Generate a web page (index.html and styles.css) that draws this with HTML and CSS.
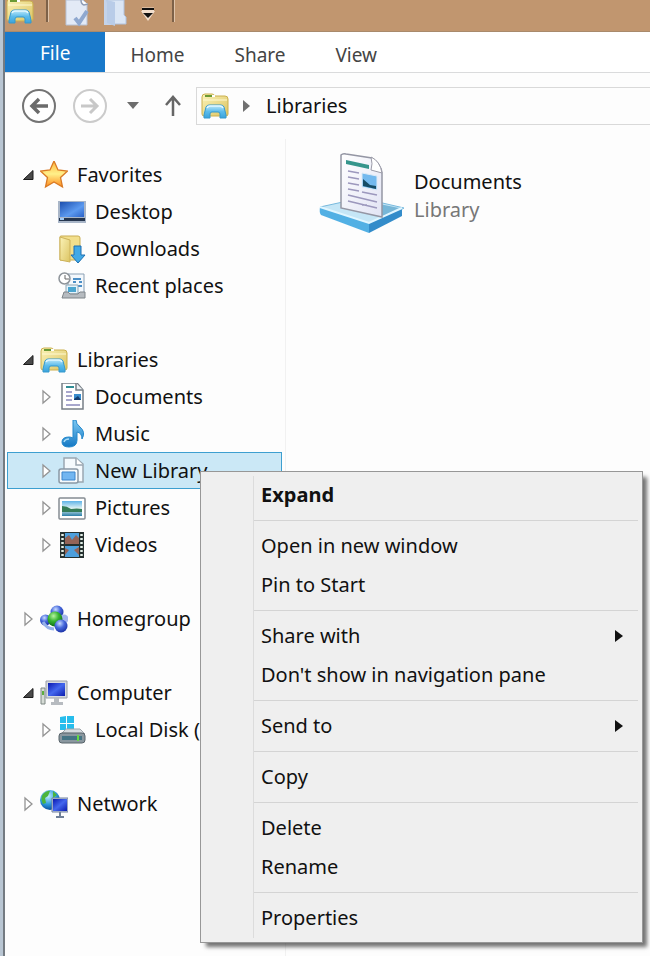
FILE: index.html
```
<!DOCTYPE html>
<html lang="en">
<head>
<meta charset="utf-8">
<title>Libraries</title>
<link rel="stylesheet" href="styles.css">
</head>
<body>
<svg class="defs" aria-hidden="true">
  <defs>
    <linearGradient id="gFolder" x1="0" y1="0" x2="1" y2="1"><stop offset="0" stop-color="#fbf3b8"/><stop offset="1" stop-color="#dcc462"/></linearGradient>
    <linearGradient id="gStand" x1="0" y1="0" x2="0" y2="1"><stop offset="0" stop-color="#c4ebfa"/><stop offset=".5" stop-color="#5cbcec"/><stop offset="1" stop-color="#3aa3dc"/></linearGradient>
    <linearGradient id="gBlue" x1="0" y1="0" x2="1" y2="1"><stop offset="0" stop-color="#1c4fae"/><stop offset=".6" stop-color="#5c9af0"/><stop offset="1" stop-color="#2a62c8"/></linearGradient>
    <linearGradient id="gScreen" x1="0" y1="0" x2="1" y2="1"><stop offset="0" stop-color="#0a18b0"/><stop offset=".5" stop-color="#4468ee"/><stop offset="1" stop-color="#0c1cae"/></linearGradient>
    <linearGradient id="gStar" x1="0" y1="0" x2="0" y2="1"><stop offset="0" stop-color="#ffb43c"/><stop offset=".5" stop-color="#fff08a"/><stop offset="1" stop-color="#ff8a1c"/></linearGradient>
    <linearGradient id="gNote" x1="0" y1="0" x2="0" y2="1"><stop offset="0" stop-color="#7cc8f2"/><stop offset="1" stop-color="#1478c4"/></linearGradient>
    <linearGradient id="gPhoto" x1="0" y1="0" x2="0" y2="1"><stop offset="0" stop-color="#5fb4e8"/><stop offset=".5" stop-color="#e4f4f4"/><stop offset="1" stop-color="#2a7ea8"/></linearGradient>
    <linearGradient id="gPaper" x1="0" y1="0" x2="1" y2="1"><stop offset="0" stop-color="#ffffff"/><stop offset="1" stop-color="#e2e4f4"/></linearGradient>
    <radialGradient id="gBallB" cx=".4" cy=".3" r=".7"><stop offset="0" stop-color="#c8dcff"/><stop offset=".5" stop-color="#4668dc"/><stop offset="1" stop-color="#1c34a8"/></radialGradient>
    <radialGradient id="gBallG" cx=".4" cy=".3" r=".7"><stop offset="0" stop-color="#b8f4a0"/><stop offset=".5" stop-color="#36b430"/><stop offset="1" stop-color="#107018"/></radialGradient>
    <radialGradient id="gGlobe" cx=".4" cy=".3" r=".7"><stop offset="0" stop-color="#c4f0ff"/><stop offset=".6" stop-color="#2c98dc"/><stop offset="1" stop-color="#0c50a0"/></radialGradient>
    <symbol id="library" viewBox="0 0 28 26">
      <path d="M1 21V4q0-3 3-3h7q2 0 3 2h10q3 0 3 3v15q0 2-2 2H3q-2 0-2-2z" fill="url(#gFolder)" stroke="#cbb04e"/>
      <path d="M4 3h7" stroke="#6a9a34" stroke-width="2"/><path d="M11 3h3" stroke="#fff" stroke-width="2"/><path d="M2 7h24" stroke="#fff9d2"/>
      <path d="M3 25v-3l2-8q1-2 3-2h12q2 0 3 2l2 8v3h-6v-4q0-2-2-2h-6q-2 0-2 2v4z" fill="url(#gStand)" stroke="#3799cd"/>
      <path d="M6 15q1-2 3-2h10q2 0 3 2" fill="none" stroke="#e1f7ff" stroke-width="1.500"/>
    </symbol>
    <symbol id="closed" viewBox="0 0 12 16"><path d="M3 2l7 6-7 6z" fill="#fff" stroke="#949494" stroke-width="1.300"/></symbol>
    <symbol id="open" viewBox="0 0 12 12"><path d="M11 1.500v9H1.500z" fill="#4a4a4a" stroke="#1c1c1c"/></symbol>
  </defs>
</svg>

<div class="window">
  <header class="titlebar">
    <svg class="icon app" viewBox="0 0 28 26"><use href="#library"/></svg>
    <span class="bar"></span>
    <button class="quick" aria-label="Properties"><svg width="24" height="28" viewBox="0 0 24 28"><path d="M1 0h17l4 4v21H1z" fill="#e3eaf6" stroke="#b7c2d6"/><path d="M16 0q0 4 3 5l4-1" fill="#fff" stroke="#8f9db4" stroke-width="1.500"/><path d="M10 18l4 5 8-12" fill="none" stroke="#8fa8cf" stroke-width="4"/></svg></button>
    <button class="quick" aria-label="New folder"><svg width="24" height="28" viewBox="0 0 24 28"><path d="M1 0h9v25H1z" fill="#c4d3ea"/><path d="M4 0h17v15l2 2v7H8z" fill="#dbe6f5" stroke="#b0c2de"/><path d="M4 0l8 2v24l-8-3z" fill="#b9cce8"/></svg></button>
    <button class="quick more" aria-label="Customize toolbar"><svg width="14" height="14" viewBox="0 0 14 14"><path d="M1 3h12" stroke="#f2dfce" stroke-width="5"/><path d="M0 4h14L7 14z" fill="#f2dfce"/><path d="M1 2h12" stroke="#111" stroke-width="2"/><path d="M2 6h10l-5 5z" fill="#111"/></svg></button>
    <span class="bar"></span>
  </header>

  <nav class="tabs" aria-label="Ribbon">
    <button class="tab file">File</button>
    <button class="tab">Home</button>
    <button class="tab">Share</button>
    <button class="tab">View</button>
  </nav>

  <div class="navbar">
    <button class="nav" aria-label="Back"><svg width="36" height="36" viewBox="0 0 36 36"><circle cx="18" cy="18" r="16" fill="#fff" stroke="#747474" stroke-width="2"/><path d="M27 18H12M18 11l-7 7 7 7" fill="none" stroke="#6b6b6b" stroke-width="3.500"/></svg></button>
    <button class="nav" aria-label="Forward"><svg width="36" height="36" viewBox="0 0 36 36"><circle cx="18" cy="18" r="16" fill="#fff" stroke="#cbcbcb" stroke-width="2"/><path d="M9 18h16M18 11l7 7-7 7" fill="none" stroke="#c8c8c8" stroke-width="3"/></svg></button>
    <button class="nav" aria-label="Recent locations"><svg width="14" height="8" viewBox="0 0 14 8"><path d="M1 0h12L7 7z" fill="#6d6d6d"/></svg></button>
    <button class="nav" aria-label="Up"><svg width="16" height="22" viewBox="0 0 16 22"><path d="M8 21V3M1 10l7-8 7 8" fill="none" stroke="#666" stroke-width="2.500"/></svg></button>
    <div class="address">
      <svg class="icon" viewBox="0 0 28 26"><use href="#library"/></svg>
      <svg class="crumb" width="8" height="12" viewBox="0 0 8 12"><path d="M0 0l7 6-7 6z" fill="#707070"/></svg>
      <span>Libraries</span>
    </div>
  </div>

  <div class="content">
    <nav class="tree" aria-label="Navigation pane">
      <ul>
        <li class="row"><svg class="arrow"><use href="#open"/></svg>
          <svg class="icon" viewBox="0 0 28 28"><path d="M14 0l4 9 9.500 1-7 6.500 2 9.500-8.500-5-8.500 5 2-9.500L.5 10l9.500-1z" fill="url(#gStar)" stroke="#d97a24" stroke-width="1.300"/></svg>Favorites</li>
        <li class="row sub"><span class="arrow"></span>
          <svg class="icon" viewBox="0 0 28 28"><path d="M0 3h28v22H0z" fill="#a9b6c8"/><path d="M2 4h24v15H2z" fill="url(#gBlue)"/><path d="M1 20h26v3H1z" fill="#26364e"/><path d="M2 21h4" stroke="#9fc8f4" stroke-width="2"/></svg>Desktop</li>
        <li class="row sub"><span class="arrow"></span>
          <svg class="icon" viewBox="0 0 28 28"><path d="M2 2q0-1 1-1h17q2 0 2 2v22H2z" fill="#f2df8c" stroke="#c9ad52"/><path d="M2 2l10 3v22L2 25z" fill="url(#gFolder)" stroke="#cdb25a"/><path d="M16 11h7v9h4l-7 8-7-8h3z" fill="#41a9e6" stroke="#1e6fb0"/></svg>Downloads</li>
        <li class="row sub"><span class="arrow"></span>
          <svg class="icon" viewBox="0 0 28 28"><path d="M10 2h16v19H10z" fill="#f4f8fc" stroke="#8ba0b4"/><path d="M15 7h8M15 10h3m3 0h3M17 14h7" stroke="#4d8fc6" stroke-width="2"/><path d="M8 13h12v9H8z" fill="#e4f3fb" stroke="#8fa6b5"/><path d="M10 15h8v5h-8z" fill="#4ba5cf"/><path d="M6 20h4l2 2h8l2-2h5v6H4z" fill="#b6bbc0" stroke="#7f858a"/><circle cx="6.500" cy="6.500" r="5.500" fill="#fff" stroke="#8e949a" stroke-width="1.500"/><path d="M7 3v4h4" fill="none" stroke="#666"/></svg>Recent places</li>
      </ul>
      <ul>
        <li class="row"><svg class="arrow"><use href="#open"/></svg>
          <svg class="icon" viewBox="0 0 28 26"><use href="#library"/></svg>Libraries</li>
        <li class="row sub"><svg class="arrow"><use href="#closed"/></svg>
          <svg class="icon" viewBox="0 0 28 28"><path d="M4 0h15l6 7v19H4z" fill="#fff" stroke="#777f86" stroke-width="1.500"/><path d="M18 0v7h7" fill="#edf0f4" stroke="#777f86" stroke-width="1.500"/><path d="M8 4h8" stroke="#318e96" stroke-width="2"/><path d="M8 9h6M8 13h6M8 17h6M8 22h14" stroke="#8c8bbd" stroke-width="1.500"/><path d="M16 11h7v6h-7z" fill="#3a8dce"/><path d="M16 16l4-3 3 4h-7z" fill="#153e70"/></svg>Documents</li>
        <li class="row sub"><svg class="arrow"><use href="#closed"/></svg>
          <svg class="icon" viewBox="0 0 28 28"><path d="M15 0h3q0 4 4 7 6 5 2 12 0-6-5-7v8q0 7-8 7-7 0-7-5 0-5 7-5 2 0 4 1z" fill="url(#gNote)" stroke="#2388cc"/><path d="M6 22q1-3 5-3" fill="none" stroke="#a7dcf7" stroke-width="1.500"/></svg>Music</li>
        <li class="row sub selected"><svg class="arrow"><use href="#closed"/></svg>
          <svg class="icon" viewBox="0 0 28 28"><path d="M6 1h12l7 6v18H6z" fill="#f5fafd" stroke="#9aa7b1" stroke-width="1.500"/><path d="M18 1v7h7" fill="#fff" stroke="#9aa7b1" stroke-width="1.500"/><rect x="1" y="12" width="19" height="14" rx="2" fill="#f6fafc" stroke="#8998a5" stroke-width="1.500"/><path d="M4 15h13v8H4z" fill="#72b6f1" stroke="#3d85cc"/></svg>New Library</li>
        <li class="row sub"><svg class="arrow"><use href="#closed"/></svg>
          <svg class="icon" viewBox="0 0 28 28"><rect x="1" y="4" width="26" height="21" rx="1" fill="#fff" stroke="#858c92" stroke-width="1.500"/><path d="M4 7h20v15H4z" fill="url(#gPhoto)"/><path d="M4 12q5 0 9 3 6-1 11 0v3H4z" fill="#347c58"/></svg>Pictures</li>
        <li class="row sub"><svg class="arrow"><use href="#closed"/></svg>
          <svg class="icon" viewBox="0 0 28 28"><path d="M2 1h24v26H2z" fill="#25302f"/><path d="M7 2h14v11H7zM7 15h14v11H7z" fill="#4d9fdc"/><path d="M7 7l4-3 3 5 4-5 3 3v6H7zM7 17l4 2-4 5zM21 16l-5 3 5 5z" fill="#946458"/><path d="M4.500 3v23M23.500 3v23" stroke="#e3f0e9" stroke-width="2.500" stroke-dasharray="2 2"/></svg>Videos</li>
      </ul>
      <ul>
        <li class="row"><svg class="arrow"><use href="#closed"/></svg>
          <svg class="icon" viewBox="0 0 28 28"><circle cx="5.500" cy="15" r="5.500" fill="url(#gBallB)"/><circle cx="17" cy="7" r="6.500" fill="url(#gBallB)"/><circle cx="24" cy="14" r="4.500" fill="#a4b5ed"/><circle cx="15" cy="14" r="7.500" fill="url(#gBallG)"/><circle cx="21" cy="21" r="6.500" fill="url(#gBallB)"/><path d="M3 17q4 7 11 7" fill="none" stroke="#95b1ea" stroke-width="3"/></svg>Homegroup</li>
      </ul>
      <ul>
        <li class="row"><svg class="arrow"><use href="#open"/></svg>
          <svg class="icon" viewBox="0 0 28 28"><path d="M1 9h4v16H1z" fill="#d5dbd5" stroke="#7e8884"/><path d="M3 12v4" stroke="#5dae3e" stroke-width="2"/><path d="M6 2h21v17H6z" fill="#d6dae0" stroke="#9a9ea6"/><path d="M8 4h17v13H8z" fill="url(#gScreen)"/><path d="M14 19h5v4h4v3H11v-3h3z" fill="#b7bbc0"/></svg>Computer</li>
        <li class="row sub"><svg class="arrow"><use href="#closed"/></svg>
          <svg class="icon" viewBox="0 0 28 28"><path d="M2 1l6-1v7H2zM9 0h7v7H9zM2 8h6v6H2zM9 8h7v6H9z" fill="#27bdec"/><path d="M4 17l4-4h14l5 5z" fill="#d7dce0" stroke="#9da5aa"/><rect x="1" y="17" width="26" height="10" rx="3" fill="#8a979f" stroke="#59646b"/><path d="M4 20h20v4H4z" fill="#457585"/><path d="M20 19v6" stroke="#64d943" stroke-width="2"/></svg>Local Disk (C:)</li>
      </ul>
      <ul>
        <li class="row"><svg class="arrow"><use href="#closed"/></svg>
          <svg class="icon" viewBox="0 0 28 28"><circle cx="10" cy="10" r="10" fill="url(#gGlobe)"/><path d="M3 4q5-4 7-3l-2 5-3 2 1 5-3 1Q0 8 3 4zM13 1l4 4-4 3z" fill="#4bb53d"/><path d="M12 8h16v14H12z" fill="#c7d0de" stroke="#7382a0"/><path d="M13 9h14v12H13z" fill="url(#gScreen)"/><path d="M20 22v5M16 27h8" stroke="#6f8098" stroke-width="2"/></svg>Network</li>
      </ul>
    </nav>
    <main class="files">
      <a class="item" href="#documents">
        <svg width="86" height="84" viewBox="0 0 86 84">
          <path d="M2 55l41-9 43 10-33 20z" fill="#c5e6f6" stroke="#77b9dd"/>
          <path d="M2 55l49 16v10L3 63q-2-3-1-8z" fill="#52b0e4"/><path d="M51 71l33-15v8L51 81z" fill="#338cca"/>
          <path d="M2 55l49 16 33-15" fill="none" stroke="#e1f6ff" stroke-width="2"/>
          <path d="M47 49l34 7-17 8-17-5z" fill="#77b6d7"/>
          <path d="M23 3q2-2 5-1l26 4q9 6 10 15v44L23 56z" fill="url(#gPaper)" stroke="#9496a4" stroke-width="1.500"/>
          <path d="M53 5q2 7 0 13l11 3Q62 9 53 5z" fill="#fff" stroke="#9b9ba8"/>
          <path d="M28 8l23 5v4L28 12z" fill="#35958c"/>
          <path d="M30 19l11 2M30 25l11 2M30 31l11 2M30 37l11 2M30 43l29 7M30 49l29 7M44 40l15 3M44 53h5" fill="none" stroke="#9c98bd" stroke-width="1.500"/>
          <path d="M44 21l15 3v14l-15-3z" fill="#73b9ee" stroke="#dceaf6"/><path d="M45 27l7 6 6 1v3l-13-3z" fill="#164c65"/>
        </svg>
        <span class="label"><span>Documents</span><span class="kind">Library</span></span>
      </a>
    </main>
  </div>
</div>

<div class="menu" role="menu">
  <div class="group"><button role="menuitem" class="default">Expand</button></div>
  <div class="group"><button role="menuitem">Open in new window</button><button role="menuitem">Pin to Start</button></div>
  <div class="group"><button role="menuitem" class="more">Share with</button><button role="menuitem">Don't show in navigation pane</button></div>
  <div class="group"><button role="menuitem" class="more">Send to</button></div>
  <div class="group"><button role="menuitem">Copy</button></div>
  <div class="group"><button role="menuitem">Delete</button><button role="menuitem">Rename</button></div>
  <div class="group"><button role="menuitem">Properties</button></div>
</div>
</body>
</html>
```
FILE: styles.css
```
* { box-sizing: border-box; }
body {
  margin: 0;
  overflow: hidden;
  background: #fdfdfd;
  color: #111;
  font: 20px/24px "Noto Sans", "Open Sans", sans-serif;
}
button { margin: 0; padding: 0; border: 0; background: none; color: inherit; font: inherit; }
svg { display: block; flex: none; }
ul { margin: 0; padding: 0; list-style: none; }
.defs { position: absolute; width: 0; height: 0; }
.icon { width: 28px; height: 28px; }

.window {
  display: flex;
  flex-direction: column;
  min-height: 100vh;
  border-left: 3px solid #b9c6d3;
  box-shadow: inset 2px 0 #747b82;
  padding-left: 2px;
}

.titlebar {
  display: flex;
  align-items: flex-start;
  height: 32px;
  overflow: hidden;
  background: #c1966f;
  border-bottom: 1px solid #a98a6c;
}
.titlebar .app { margin: -3px 12px 0 1px; }
.bar { width: 2px; height: 22px; background: #7d6148; box-shadow: 1px 0 #e0c4aa; }
.quick { margin-left: 17px; }
.quick + .quick { margin-left: 14px; }
.quick + .quick.more { margin: 7px 17px 0 14px; }

.tabs { display: flex; height: 41px; border-bottom: 1px solid #dadbdc; background: #fff; font-size: 19px; }
.tab { padding: 5px 25px 0; color: #444; }
.tab.file { padding: 1px 35px 0; background: #1979ca; color: #fff; }

.navbar { display: flex; align-items: center; height: 66px; padding-left: 16px; }
.nav + .nav { margin-left: 15px; }
.nav + .nav + .nav { margin-left: 18px; }
.nav + .nav + .nav + .nav { margin-left: 25px; }
.address {
  display: flex;
  align-items: center;
  flex: 1;
  height: 38px;
  margin-left: 15px;
  padding-left: 4px;
  border: 1px solid #d9d9d9;
  border-right: 0;
}
.crumb { margin: 0 15px 0 14px; }

.content { display: flex; flex: 1; }
.tree { width: 281px; flex: none; padding-top: 17px; border-right: 1px solid #f1f1f1; }
.tree ul + ul { margin-top: 37px; }
.row {
  display: flex;
  align-items: center;
  height: 37px;
  margin: 0 3px 0 2px;
  padding-left: 14px;
  border: 1px solid transparent;
  white-space: nowrap;
}
.row .arrow { width: 12px; height: 16px; margin-right: 6px; flex: none; }
.row .icon { margin-right: 9px; }
.row.sub { padding-left: 32px; }
.row.selected { background: #cbe8f6; border-color: #3d9fd0; }

.files { flex: 1; padding: 13px 32px; }
.item { display: flex; align-items: center; color: inherit; text-decoration: none; }
.label { display: flex; flex-direction: column; margin-left: 10px; padding-top: 3px; line-height: 28px; }
.kind { color: #777; }

.menu {
  position: absolute;
  left: 200px;
  top: 471px;
  width: 443px;
  padding: 3px 4px 5px;
  border: 1px solid #979797;
  background: linear-gradient(90deg, transparent 52px, #dcdcdc 52px, #dcdcdc 53px, transparent 53px) no-repeat 0 4px / 100% calc(100% - 8px), #efefef;
  box-shadow: 5px 5px 4px -1px rgba(0, 0, 0, .55);
}
.menu .group + .group { margin-left: 49px; padding-top: 5px; margin-top: 6px; border-top: 1px solid #d4d4d4; }
.menu button { display: flex; align-items: center; width: 100%; height: 39px; padding: 0 15px 0 7px; text-align: left; }
.menu .group:first-child button { padding-left: 56px; }
.menu .default { font-weight: 700; }
.menu .more::after {
  content: "";
  margin-left: auto;
  border: 6px solid transparent;
  border-left: 8px solid #111;
  border-right: 0;
}
```
